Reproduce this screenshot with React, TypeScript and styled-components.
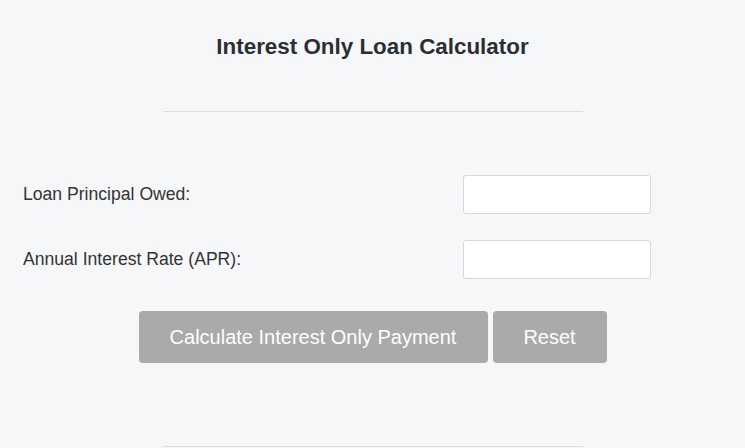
import React from "react";
import styled, { createGlobalStyle } from "styled-components";

const Global = createGlobalStyle`
  html, body { margin: 0; padding: 0; background: #f6f7f9; }
  body { font-family: "Liberation Sans", Arial, sans-serif; color: #333; }
`;

const Page = styled.div`
  width: 745px;
  height: 448px;
  overflow: hidden;
  display: flex;
  flex-direction: column;
  align-items: center;
`;

const Title = styled.h1`
  margin: 35px 0 0;
  font-size: 22.4px;
  line-height: 24px;
  font-weight: bold;
  color: #2b2f33;
  text-align: center;
`;

const Rule = styled.div<{ $top: number }>`
  width: 420px;
  height: 1px;
  background: #dcdde0;
  margin-top: ${(p) => p.$top}px;
`;

const Form = styled.div`
  align-self: stretch;
  margin-top: 63px;
  padding-left: 23px;
  display: flex;
  flex-direction: column;
  gap: 26px;
`;

const Row = styled.div`
  display: grid;
  grid-template-columns: 440px 188px;
  align-items: center;
`;

const Label = styled.label`
  font-size: 17.6px;
  color: #333;
`;

const Input = styled.input`
  box-sizing: border-box;
  width: 188px;
  height: 39px;
  border: 1px solid #d6d7da;
  border-radius: 3px;
  background: #fff;
  font-size: 16px;
  padding: 0 8px;
  outline: none;
`;

const Buttons = styled.div`
  margin-top: 32px;
  display: flex;
  gap: 5px;
`;

const Button = styled.button<{ $w: number }>`
  width: ${(p) => p.$w}px;
  height: 52px;
  border: none;
  border-radius: 4px;
  background: #aaaaaa;
  color: #fff;
  font-family: "Liberation Sans", Arial, sans-serif;
  font-size: 20px;
  cursor: pointer;
`;

export default function App() {
  return (
    <>
      <Global />
      <Page>
        <Title>Interest Only Loan Calculator</Title>
        <Rule $top={52} />
        <Form>
          <Row>
            <Label>Loan Principal Owed:</Label>
            <Input type="text" />
          </Row>
          <Row>
            <Label>Annual Interest Rate (APR):</Label>
            <Input type="text" />
          </Row>
        </Form>
        <Buttons>
          <Button $w={349}>Calculate Interest Only Payment</Button>
          <Button $w={114}>Reset</Button>
        </Buttons>
        <Rule $top={83} />
      </Page>
    </>
  );
}
